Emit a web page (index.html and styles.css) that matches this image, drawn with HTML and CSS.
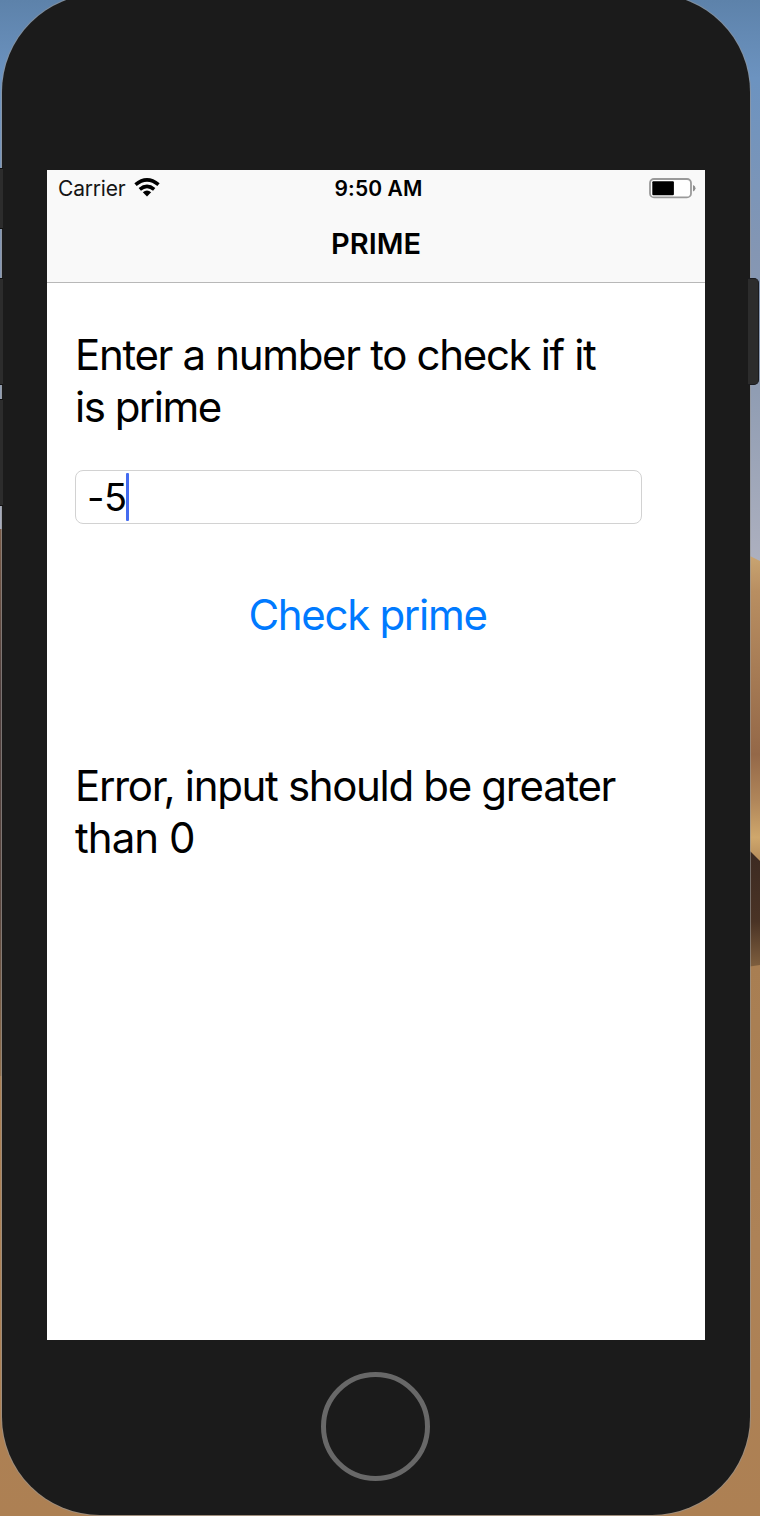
FILE: index.html
```html
<!DOCTYPE html>
<html lang="en">
<head>
<meta charset="utf-8">
<title>Prime</title>
<link rel="stylesheet" href="styles.css">
</head>
<body>
<div class="desktop">
  <svg class="wallpaper" viewBox="0 0 760 1516" aria-hidden="true">
    <defs>
      <linearGradient id="sky" gradientUnits="userSpaceOnUse" x1="0" y1="0" x2="0" y2="560">
        <stop offset="0" stop-color="#5d82aa"/><stop offset=".14" stop-color="#6c93c0"/><stop offset=".45" stop-color="#8496b3"/><stop offset=".7" stop-color="#909db3"/><stop offset="1" stop-color="#adb0bf"/>
      </linearGradient>
      <linearGradient id="dune" gradientUnits="userSpaceOnUse" x1="0" y1="555" x2="0" y2="862">
        <stop offset="0" stop-color="#c9a572"/><stop offset=".12" stop-color="#b88e61"/><stop offset=".65" stop-color="#946848"/><stop offset=".8" stop-color="#b0865a"/><stop offset=".92" stop-color="#cfa76c"/><stop offset="1" stop-color="#b48b5a"/>
      </linearGradient>
      <linearGradient id="shade" gradientUnits="userSpaceOnUse" x1="0" y1="852" x2="0" y2="968">
        <stop offset="0" stop-color="#3c2a22"/><stop offset=".6" stop-color="#4a3325"/><stop offset="1" stop-color="#80603f"/>
      </linearGradient>
      <linearGradient id="sand" gradientUnits="userSpaceOnUse" x1="0" y1="965" x2="0" y2="1516">
        <stop offset="0" stop-color="#a87e52"/><stop offset=".5" stop-color="#ad8257"/><stop offset="1" stop-color="#ad8053"/>
      </linearGradient>
      <linearGradient id="ridge" gradientUnits="userSpaceOnUse" x1="0" y1="529" x2="0" y2="1076">
        <stop offset="0" stop-color="#7b5c48"/><stop offset=".3" stop-color="#4f3f3e"/><stop offset=".7" stop-color="#5c4840"/><stop offset="1" stop-color="#92714e"/>
      </linearGradient>
    </defs>
    <path fill="url(#sky)" d="M0 0h760v570H0z"/>
    <path fill="url(#dune)" d="M740 551L760 561V866H740z"/>
    <path fill="url(#shade)" d="M740 843L751 852L760 861V970H740z"/>
    <path fill="url(#sand)" d="M0 1076H740V968L760 965V1516H0z"/>
    <path fill="url(#ridge)" d="M0 529h20v547H0z"/>
  </svg>
  <div class="key key-mute"></div>
  <div class="key key-up"></div>
  <div class="key key-down"></div>
  <main class="phone">
    <section class="screen">
      <header class="topbar">
        <div class="status">
          <div class="carrier"><span>Carrier</span>
            <svg class="wifi" viewBox="0 0 26 19" aria-hidden="true">
              <path fill="none" stroke="#000" stroke-width="3.6" d="M1.5 6.7Q13 -2.9 24.5 6.7M5.8 11.3Q13 5.3 20.2 11.3"/>
              <path d="M8.8 14.2Q13 11 17.2 14.2L13 18.4z"/>
            </svg>
          </div>
          <div class="clock">9:50 AM</div>
          <svg class="battery" viewBox="0 0 47 21" aria-hidden="true">
            <rect x="1" y="1" width="41" height="18.4" rx="4" fill="#fff" stroke="#9a9a9a" stroke-width="1.8"/>
            <rect x="3.3" y="3.3" width="21.6" height="14" rx="1"/>
            <path fill="#8e8e8e" d="M44 7Q46.5 8 46.5 10.3T44 13.6z"/>
          </svg>
        </div>
        <h1 class="title">PRIME</h1>
      </header>
      <div class="content">
        <p class="label prompt"><span class="prompt-a">Enter a number to check if it</span><br><span class="prompt-b">is prime</span></p>
        <div class="field"><span class="value">-5</span><span class="caret"></span></div>
        <div class="action">Check prime</div>
        <p class="label result"><span class="result-a">Error, input should be greater</span><br><span class="result-b">than 0</span></p>
      </div>
    </section>
    <div class="home"></div>
  </main>
  <div class="key key-side"></div>
</div>
</body>
</html>
```
FILE: styles.css
```css
* { box-sizing: border-box; }
body { margin: 0; font-family: Inter, sans-serif; color: #000; }
.desktop { position: relative; height: 1516px; padding: 0 10px 0 2px; overflow: hidden; }
.wallpaper { position: absolute; inset: 0; width: 760px; height: 1516px; }
.phone { position: relative; height: 1521px; margin-top: -6px; padding: 176px 45px 0; background: #1b1b1b; border-radius: 98px; box-shadow: 0 0 0 1px rgba(150, 150, 150, .6); }
.key { position: absolute; left: 0; width: 3px; background: #2c2c2c; border: solid #111; border-width: 1px 0; z-index: 1; }
.key-mute { top: 168px; height: 61px; }
.key-up { top: 278px; height: 107px; }
.key-down { top: 399px; height: 107px; }
.key-side { left: 748px; top: 278px; width: 11px; height: 107px; border: 1px solid #1a1b1f; border-left: 0; border-radius: 0 5px 5px 0; }
.screen { height: 1170px; background: #fff; }
.topbar { height: 113px; background: #f9f9f9; border-bottom: 1px solid #b8b8b8; }
.status { display: grid; grid-template-columns: 1fr auto 1fr; align-items: center; height: 36px; padding: 0 9px 0 11px; }
.carrier { display: flex; align-items: center; gap: 9px; font-size: 21px; letter-spacing: -.2px; color: #151515; }
.wifi { width: 26px; height: 19px; margin-top: -1px; }
.clock { font-size: 21px; font-weight: 600; letter-spacing: .1px; padding-left: 3px; }
.battery { width: 47px; height: 21px; justify-self: end; }
.title { margin: 19px 0 0; font-size: 29px; line-height: 38px; font-weight: 600; text-align: center; letter-spacing: 0; }
.content { padding: 46px 28px 0; }
.label { margin: 0; font-size: 42px; line-height: 52px; letter-spacing: -1.33px; white-space: nowrap; }
.prompt-b { letter-spacing: -1.5px; }
.result-b { letter-spacing: -.95px; }
.field { display: flex; align-items: center; width: 567px; height: 54px; margin-top: 37px; padding-left: 11px; border: 1px solid #d2d2d2; border-radius: 8px; font-size: 38px; letter-spacing: -.5px; }
.caret { width: 3px; height: 48px; margin-left: -1px; background: #446cf0; border-radius: 1px; }
.action { width: 585px; margin-top: 65px; font-size: 42px; line-height: 52px; letter-spacing: -1.3px; text-align: center; color: #007aff; }
.result { margin-top: 119px; }
.home { width: 109px; height: 109px; margin: 32px 0 0 274px; border: 5px solid #686868; border-radius: 50%; }
```
